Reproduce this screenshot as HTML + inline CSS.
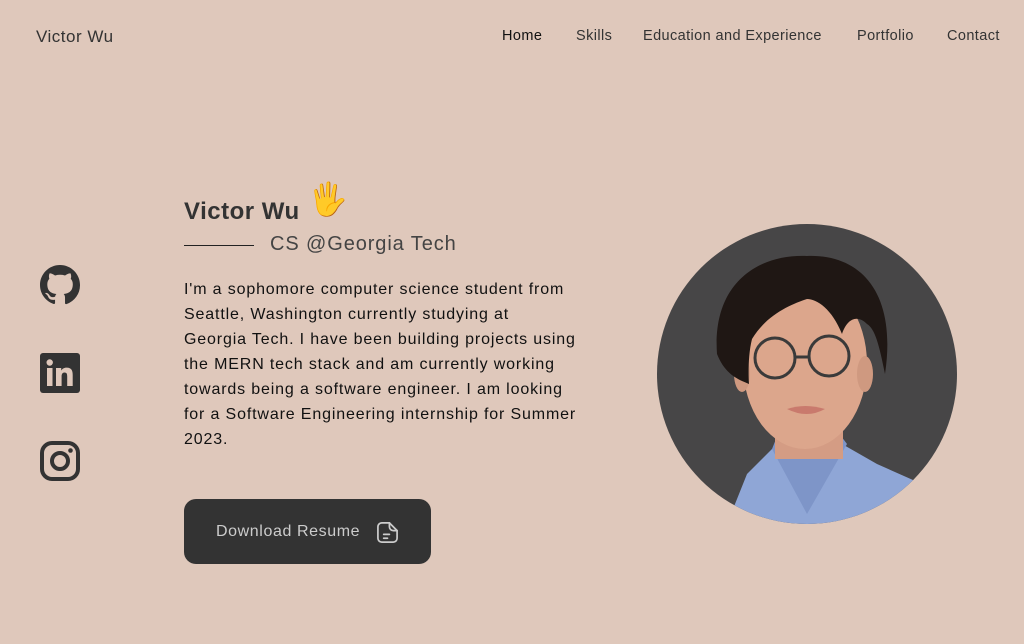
<!DOCTYPE html>
<html><head><meta charset="utf-8"><style>
*{margin:0;padding:0;box-sizing:border-box}
body{width:1024px;height:644px;background:#dfc8bb;font-family:"Liberation Sans",sans-serif;color:#333;position:relative;overflow:hidden}
.logo{position:absolute;left:36px;top:27px;font-size:17px;color:#333;letter-spacing:0.5px}
.nav a{position:absolute;top:28px;font-size:14.5px;color:#333;text-decoration:none;white-space:nowrap;letter-spacing:0.4px}
h1{position:absolute;left:184px;top:198px;font-size:24px;font-weight:bold;color:#333;letter-spacing:0.5px}
.wave{position:absolute;left:308px;top:180px;font-size:32px;color:#f5c84c}
.line{position:absolute;left:184px;top:245px;width:70px;height:1px;background:#222}
.sub{position:absolute;left:270px;top:233px;font-size:20px;color:#444;letter-spacing:0.9px}
.desc{position:absolute;left:184px;top:277px;width:440px;font-size:16px;line-height:25px;color:#111;letter-spacing:0.85px;white-space:nowrap}
.btn{position:absolute;left:184px;top:499px;width:247px;height:65px;background:#333;border-radius:12px;color:#ccc;font-size:16px;padding:24px 0 0 32px;letter-spacing:0.6px}
.ico{position:absolute;left:40px}
</style></head><body>
<div class="logo">Victor Wu</div>
<div class="nav">
<a style="left:502px;color:#111">Home</a>
<a style="left:576px">Skills</a>
<a style="left:643px">Education and Experience</a>
<a style="left:857px">Portfolio</a>
<a style="left:947px">Contact</a>
</div>
<svg class="ico" style="top:265px" width="40" height="40" viewBox="0 0 16 16"><path fill="#333" d="M8 0C3.58 0 0 3.58 0 8c0 3.54 2.290 6.53 5.47 7.59.4.07.55-.17.55-.38v-1.33c-2.23.48-2.7-1.07-2.7-1.07-.36-.92-.89-1.170-.89-1.17-.73-.5.05-.49.05-.49.8.06 1.23.83 1.23.83.72 1.23 1.88.87 2.34.67.07-.52.28-.87.51-1.07-1.78-.2-3.64-.89-3.64-3.95 0-.87.31-1.59.82-2.15-.08-.2-.36-1.02.08-2.12 0 0 .67-.21 2.2.82a7.6 7.6 0 0 1 4 0c1.53-1.04 2.2-.82 2.2-.82.44 1.1.16 1.92.08 2.12.51.56.82 1.27.82 2.15 0 3.07-1.87 3.75-3.65 3.95.29.25.54.73.54 1.48v2.2c0 .21.15.46.55.38A8 8 0 0 0 16 8c0-4.42-3.58-8-8-8z"/></svg>
<svg class="ico" style="top:353px" width="40" height="40" viewBox="0 0 40 40"><rect width="40" height="40" rx="3" fill="#333"/><rect x="7" y="15" width="5.5" height="18" fill="#dfc8bb"/><circle cx="9.7" cy="9.5" r="3.2" fill="#dfc8bb"/><path fill="#dfc8bb" d="M16 15h5.2v2.6c.9-1.7 2.8-3 5.5-3 5 0 6 3.2 6 7.4V33h-5.5v-9.5c0-2.2-.4-4-2.6-4s-3 1.7-3 4V33H16z"/></svg>
<svg class="ico" style="top:441px" width="40" height="40" viewBox="0 0 40 40"><rect x="2" y="2" width="36" height="36" rx="10" fill="none" stroke="#333" stroke-width="4"/><circle cx="20" cy="20" r="8" fill="none" stroke="#333" stroke-width="4"/><circle cx="30.5" cy="9.5" r="2.3" fill="#333"/></svg>
<h1>Victor Wu</h1>
<div class="wave">🖐</div>
<div class="line"></div>
<div class="sub">CS @Georgia Tech</div>
<div class="desc">I'm a sophomore computer science student from<br>Seattle, Washington currently studying at<br>Georgia Tech. I have been building projects using<br>the MERN tech stack and am currently working<br>towards being a software engineer. I am looking<br>for a Software Engineering internship for Summer<br>2023.</div>
<div class="btn">Download Resume
<svg style="position:absolute;left:192px;top:22px" width="23" height="23" viewBox="0 0 24 24" fill="none" stroke="#ccc" stroke-width="1.8" stroke-linecap="round"><path d="M14 2H6a4 4 0 0 0-4 4v12a4 4 0 0 0 4 4h12a4 4 0 0 0 4-4v-8z"/><path d="M14 2v4a4 4 0 0 0 4 4h4"/><path d="M8 14h6M8 18h4"/></svg></div>
<svg style="position:absolute;left:657px;top:224px" width="300" height="300" viewBox="0 0 300 300">
<defs><clipPath id="c"><circle cx="150" cy="150" r="150"/></clipPath></defs>
<g clip-path="url(#c)">
<rect width="300" height="300" fill="#474647"/>
<path d="M70 300 L90 250 L115 225 L185 220 L220 240 L265 260 L280 300Z" fill="#8fa6d6"/>
<path d="M115 225 L150 290 L190 220 L175 200 L125 200Z" fill="#7e95c8"/>
<rect x="118" y="180" width="68" height="55" fill="#d49c84"/>
<ellipse cx="148" cy="140" rx="62" ry="85" fill="#dca68c"/>
<ellipse cx="85" cy="150" rx="8" ry="18" fill="#cf9980"/>
<ellipse cx="208" cy="150" rx="8" ry="18" fill="#cf9980"/>
<path d="M60 130 C55 60 100 30 150 32 C205 30 240 70 228 150 C222 120 218 105 210 100 C200 90 190 95 185 110 C175 85 160 75 150 75 C135 80 110 90 95 115 C90 135 92 160 92 160 C80 155 68 150 60 130Z" fill="#1f1714"/>
<circle cx="118" cy="134" r="20" fill="none" stroke="#3a3a3a" stroke-width="3"/>
<circle cx="172" cy="132" r="20" fill="none" stroke="#3a3a3a" stroke-width="3"/>
<path d="M138 133 h14" stroke="#3a3a3a" stroke-width="3"/>
<path d="M130 185 q18 -6 38 0 q-18 10 -38 0Z" fill="#c97a6d"/>
</g></svg>
</body></html>
